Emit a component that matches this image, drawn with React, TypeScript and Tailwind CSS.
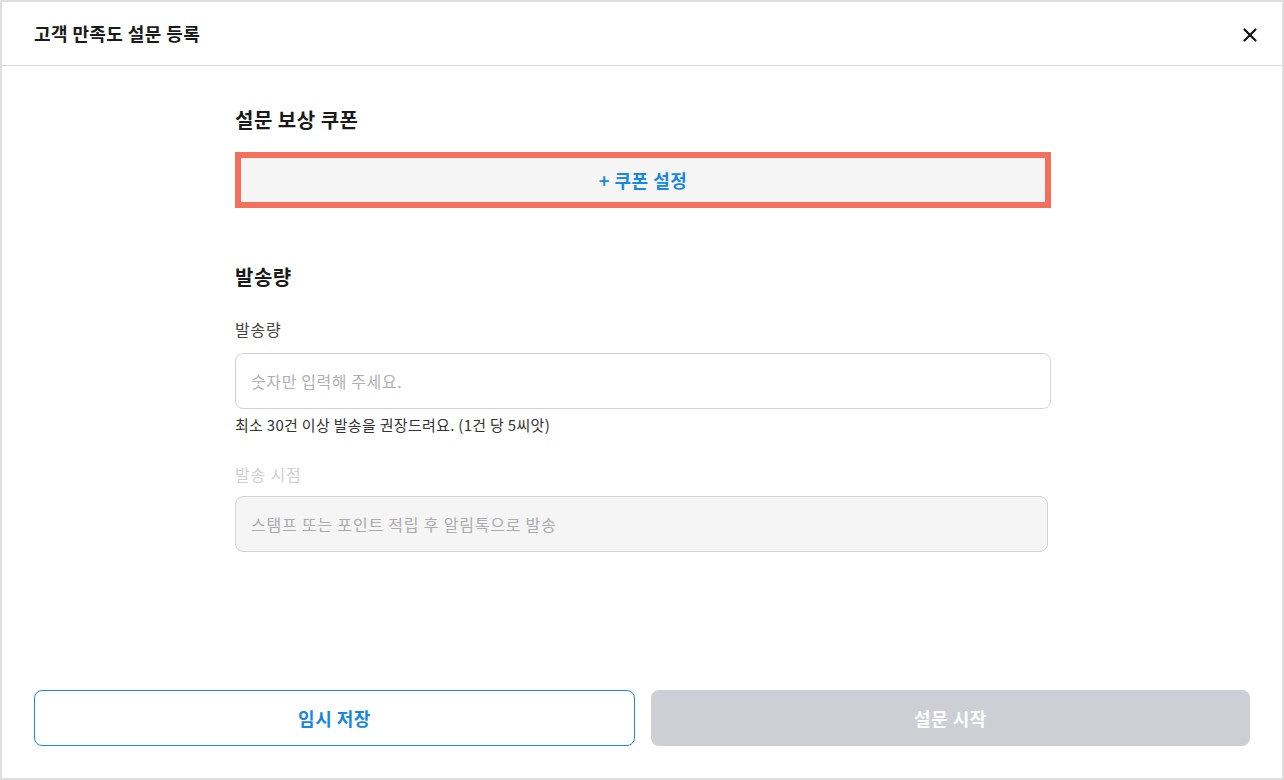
import React from "react";

const font = { fontFamily: '"Noto Sans CJK KR", "Noto Sans", sans-serif' };

export default function App() {
  return (
    <div
      className="w-[1284px] h-[780px] bg-white border-2 border-[#dedede] flex flex-col text-[#1a1a1a]"
      style={font}
    >
      <div className="h-[64px] flex items-center justify-between pl-[32px] pr-[24px] border-b border-[#d9d9d9] shrink-0">
        <h1 className="text-[18px] font-bold tracking-[0.4px]">고객 만족도 설문 등록</h1>
        <svg width="16" height="16" viewBox="0 0 16 16" className="mt-[2px]">
          <path d="M2.5 2.5 L13.5 13.5 M13.5 2.5 L2.5 13.5" stroke="#111" strokeWidth="2.2" strokeLinecap="round" />
        </svg>
      </div>

      <div className="flex-1 flex flex-col">
        <div className="w-[816px] ml-[233px] pt-[40px]">
          <h2 className="text-[20px] font-bold leading-[28px] tracking-[0.5px]">설문 보상 쿠폰</h2>
          <button className="mt-[18px] w-full h-[56px] border-[6px] border-[#f2705c] bg-[#f5f5f5] text-[#1887e3] text-[18px] font-bold tracking-[0.5px] flex items-center justify-center">
            + 쿠폰 설정
          </button>

          <h2 className="mt-[55px] text-[20px] font-bold leading-[28px] tracking-[0.5px]">발송량</h2>
          <div className="mt-[27px] text-[16px] text-[#444] leading-[22px] tracking-[0.8px]">발송량</div>
          <div className="mt-[13px] h-[56px] rounded-[8px] border border-[#d3d3d3] flex items-center px-[15px]">
            <span className="text-[16px] text-[#b0b0b0] tracking-[0.6px]">숫자만 입력해 주세요.</span>
          </div>
          <div className="mt-[6px] text-[15px] text-[#333] leading-[20px] tracking-[0.3px]">최소 30건 이상 발송을 권장드려요. (1건 당 5씨앗)</div>

          <div className="mt-[28px] text-[16px] text-[#cfcfcf] leading-[22px] tracking-[0.8px]">발송 시점</div>
          <div className="mt-[11px] w-[813px] h-[56px] rounded-[8px] border border-[#d3d3d3] bg-[#f5f5f5] flex items-center px-[15px]">
            <span className="text-[16px] text-[#ababab] tracking-[0.8px]">스탬프 또는 포인트 적립 후 알림톡으로 발송</span>
          </div>
        </div>

        <div className="mt-auto mb-[32px] px-[32px] flex gap-4">
          <button className="flex-1 h-[56px] rounded-[8px] border border-[#1a8ae5] bg-white text-[#1887e3] text-[18px] font-bold tracking-[0.5px]">
            임시 저장
          </button>
          <button className="flex-1 h-[56px] rounded-[8px] bg-[#cdcfd4] text-white text-[18px] font-bold tracking-[0.5px]">
            설문 시작
          </button>
        </div>
      </div>
    </div>
  );
}
